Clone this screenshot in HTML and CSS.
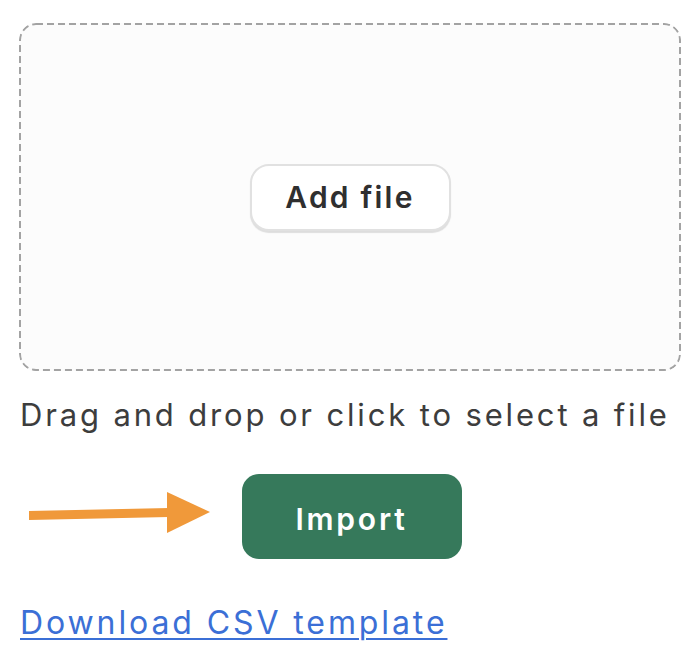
FILE: index.html
```html
<!DOCTYPE html>
<html lang="en">
<head>
  <meta charset="UTF-8">
  <title>Import</title>
  <link rel="stylesheet" href="styles.css">
</head>
<body>
  <main class="import">
    <div class="dropzone">
      <button class="btn-add" type="button">Add file</button>
    </div>
    <p class="hint">Drag and drop or click to select a file</p>

    <div class="actions">
      <svg class="arrow" viewBox="0 0 184 42">
        <polygon points="0,19 140,16 140,25 0,28"/>
        <polygon points="138,0 181,20 138,41"/>
      </svg>
      <button class="btn-import" type="button">Import</button>
    </div>

    <a href="#" class="template-link">Download CSV template</a>
  </main>
</body>
</html>
```

FILE: styles.css
```css
:root {
  --text: #3a3a3a;
  --green: #36795b;
  --orange: #f0993a;
  --link: #3b6fd6;
}
* { box-sizing: border-box; margin: 0; padding: 0; }
body {
  background: #fff;
  color: var(--text);
  font-family: Inter, "Liberation Sans", sans-serif;
}

.import {
  padding: 23px 19px 0 19px;
  width: 700px;
}

.dropzone {
  height: 348px;
  display: flex;
  align-items: center;
  justify-content: center;
  background-color: #fcfcfc;
  border-radius: 17px;
  background-image: url("data:image/svg+xml,%3csvg xmlns='http://www.w3.org/2000/svg' width='100%25' height='100%25'%3e%3crect x='1' y='1' width='calc(100%25 - 2px)' height='calc(100%25 - 2px)' rx='16' fill='none' stroke='%23a3a3a3' stroke-width='2' stroke-dasharray='7 4'/%3e%3c/svg%3e");
}

.btn-add {
  width: 201px;
  height: 67px;
  border: 2px solid #e1e1e1;
  border-radius: 19px;
  background: #fff;
  box-shadow: 0 2px 1px rgba(0,0,0,.12);
  font-family: inherit;
  font-size: 30px;
  font-weight: 600;
  letter-spacing: 2.2px;
  color: #2f2f2f;
}

.hint {
  margin-top: 26px;
  padding-left: 1px;
  font-size: 31px;
  line-height: 36px;
  letter-spacing: 2.85px;
  color: #3d3d3d;
}

.actions {
  position: relative;
  display: flex;
  justify-content: center;
  margin-top: 41px;
  padding-left: 3px;
}
.arrow {
  position: absolute;
  left: 10px;
  top: 18px;
  width: 184px;
  height: 42px;
  fill: var(--orange);
}
.btn-import {
  width: 220px;
  height: 85px;
  border: none;
  border-radius: 17px;
  background: var(--green);
  color: #fff;
  font-family: inherit;
  font-size: 30px;
  font-weight: 600;
  letter-spacing: 2.8px;
  padding-top: 4px;
}

.template-link {
  display: inline-block;
  margin-top: 44px;
  padding-left: 1px;
  font-size: 32px;
  letter-spacing: 2.9px;
  color: var(--link);
  text-decoration: underline;
  text-decoration-thickness: 2px;
  text-underline-offset: 4px;
}
```
